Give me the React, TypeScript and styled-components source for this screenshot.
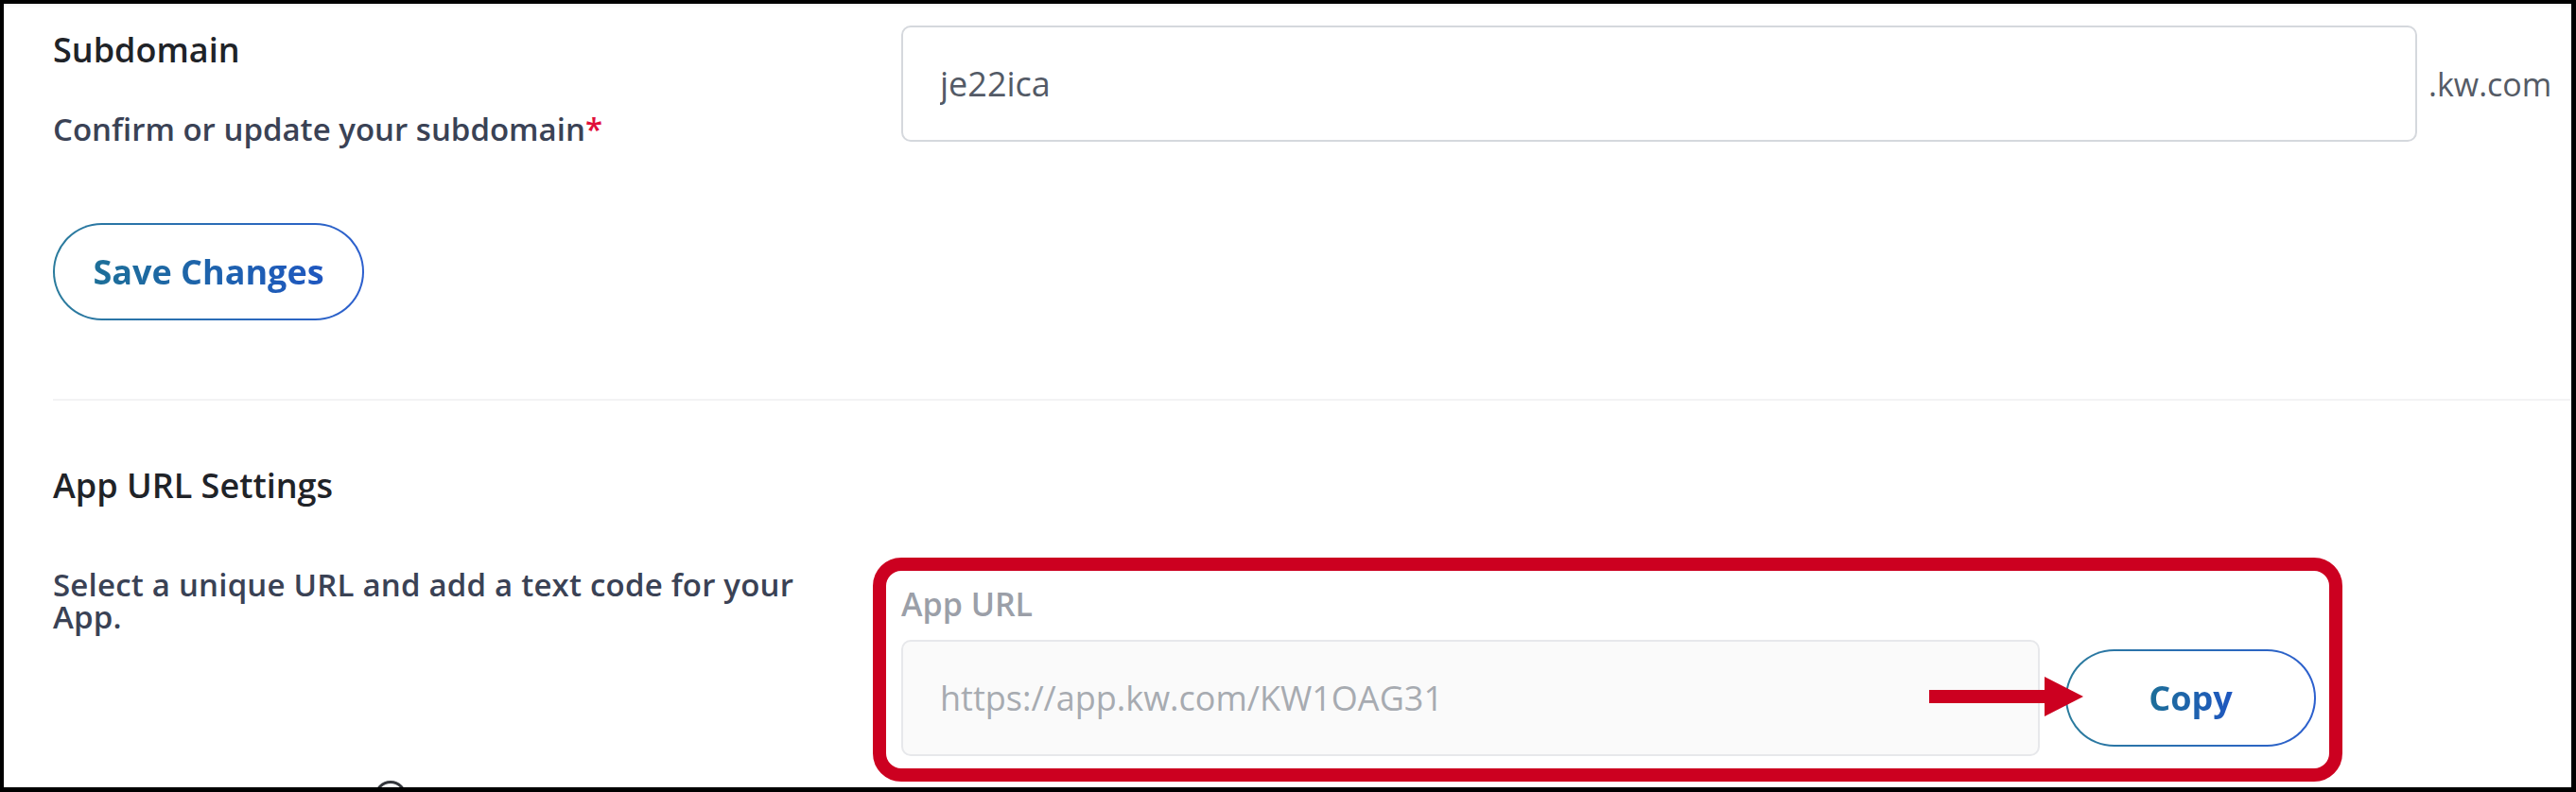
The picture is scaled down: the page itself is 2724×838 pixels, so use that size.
import React from 'react';
import styled, { createGlobalStyle } from 'styled-components';

const GlobalStyle = createGlobalStyle`
  html, body {
    margin: 0;
    padding: 0;
    background: #fff;
  }
  body {
    font-family: "Open Sans", "Noto Sans", sans-serif;
    overflow: hidden;
  }
  * {
    box-sizing: border-box;
  }
`;

const Frame = styled.div`
  width: 2724px;
  height: 838px;
  border-style: solid;
  border-color: #000;
  border-width: 4px 5px 5px 4px;
  overflow: hidden;
  background: #fff;
  padding: 23px 0 0 52px;
  box-shadow: inset 0 5px 4px -3px rgba(0, 0, 0, 0.05);
`;

const Row = styled.div<{ $top?: number }>`
  display: flex;
  align-items: flex-start;
  margin-top: ${(p) => p.$top ?? 0}px;
`;

const LeftCol = styled.div`
  width: 897px;
  flex-shrink: 0;
`;

const SectionTitle = styled.h2<{ $top?: number }>`
  margin: ${(p) => p.$top ?? 0}px 0 0;
  font-size: 36px;
  line-height: 44px;
  font-weight: 600;
  color: #1f2328;
`;

const FieldHint = styled.p`
  margin: 42px 0 0;
  font-size: 33px;
  line-height: 40px;
  font-weight: 600;
  color: #3a4255;
`;

const Required = styled.span`
  color: #e0103a;
`;

const Description = styled.p`
  margin: 12px 0 0;
  max-width: 860px;
  font-size: 33px;
  line-height: 34px;
  font-weight: 600;
  color: #3a4255;
  letter-spacing: 0.2px;
`;

const InputGroup = styled.div`
  display: flex;
  align-items: center;
  gap: 12px;
`;

const TextInput = styled.input<{ $muted?: boolean }>`
  height: 123px;
  width: ${(p) => (p.$muted ? 'auto' : '1603px')};
  flex: ${(p) => (p.$muted ? 1 : 'none')};
  min-width: 0;
  padding: 0 39px;
  border: 2px solid ${(p) => (p.$muted ? '#e7e8eb' : '#d5d8dd')};
  border-radius: 10px;
  background: ${(p) => (p.$muted ? '#fafafa' : '#fff')};
  font-family: inherit;
  font-size: 36px;
  font-weight: 400;
  color: ${(p) => (p.$muted ? '#a7abb1' : '#535a66')};
  outline: none;
`;

const Suffix = styled.span`
  font-size: 34px;
  color: #555b66;
`;

const PillButton = styled.button<{ $width: number; $top?: number }>`
  display: inline-flex;
  align-items: center;
  justify-content: center;
  height: 103px;
  width: ${(p) => p.$width}px;
  padding: 0;
  margin-top: ${(p) => p.$top ?? 0}px;
  border: 2px solid transparent;
  border-radius: 52px;
  background:
    linear-gradient(#fff, #fff) padding-box,
    linear-gradient(90deg, #2a7b9c, #2c5fce) border-box;
  font-family: inherit;
  font-size: 36px;
  font-weight: 700;
  cursor: pointer;
  flex-shrink: 0;
`;

const ButtonText = styled.span`
  background: linear-gradient(90deg, #1d6f98, #1f57c0);
  -webkit-background-clip: text;
  background-clip: text;
  color: transparent;
`;

const Divider = styled.hr`
  margin: 83px 0 0;
  border: none;
  height: 2px;
  background: #f3f3f4;
`;

const Highlight = styled.div`
  position: relative;
  margin-left: -30px;
  width: 1554px;
  border: 14px solid #cc0020;
  border-radius: 30px;
  padding: 15px 14px 13px 16px;
`;

const FieldLabel = styled.div`
  font-size: 34px;
  line-height: 40px;
  font-weight: 600;
  color: #9b9fa8;
`;

const UrlRow = styled.div`
  display: flex;
  align-items: center;
  gap: 27px;
  margin-top: 18px;
`;

const Arrow = styled.svg`
  position: absolute;
  left: 1103px;
  top: 112px;
`;

const RingRow = styled.div`
  margin-top: -1px;
  padding-left: 340px;
`;

const Ring = styled.div`
  width: 34px;
  height: 34px;
  border: 3px solid #34373c;
  border-radius: 50%;
`;

export default function App() {
  return (
    <>
      <GlobalStyle />
      <Frame>
        <Row>
          <LeftCol>
            <SectionTitle $top={4}>Subdomain</SectionTitle>
            <FieldHint>
              Confirm or update your subdomain<Required>*</Required>
            </FieldHint>
          </LeftCol>
          <InputGroup>
            <TextInput readOnly value="je22ica" />
            <Suffix>.kw.com</Suffix>
          </InputGroup>
        </Row>

        <PillButton $width={329} $top={79}>
          <ButtonText>Save Changes</ButtonText>
        </PillButton>

        <Divider />

        <SectionTitle $top={68}>App URL Settings</SectionTitle>

        <Row $top={54}>
          <LeftCol>
            <Description>Select a unique URL and add a text code for your App.</Description>
          </LeftCol>
          <Highlight>
            <FieldLabel>App URL</FieldLabel>
            <UrlRow>
              <TextInput $muted readOnly value="https://app.kw.com/KW1OAG31" />
              <PillButton $width={265}>
                <ButtonText>Copy</ButtonText>
              </PillButton>
            </UrlRow>
            <Arrow width="163" height="42" viewBox="0 0 163 42">
              <rect x="0" y="14" width="123" height="14" fill="#cc0020" />
              <polygon points="122,0 163,21 122,42" fill="#cc0020" />
            </Arrow>
          </Highlight>
        </Row>

        <RingRow>
          <Ring />
        </RingRow>
      </Frame>
    </>
  );
}
